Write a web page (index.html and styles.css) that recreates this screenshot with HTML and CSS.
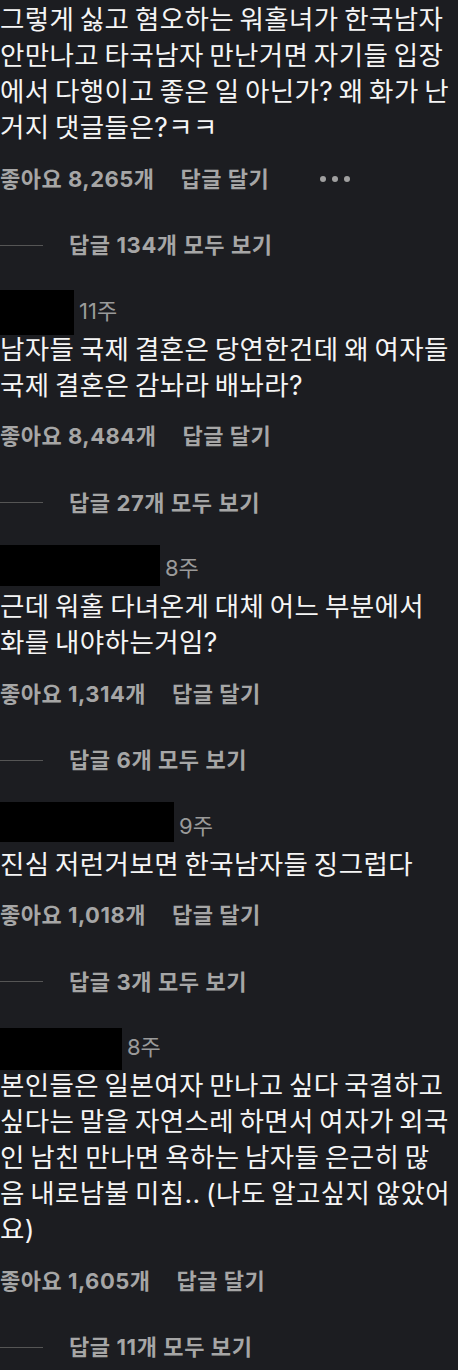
FILE: index.html
```html
<!DOCTYPE html>
<html lang="ko">
<head>
  <meta charset="UTF-8" />
  <meta name="viewport" content="width=device-width, initial-scale=1.0"/>
  <title>댓글</title>
  <link rel="stylesheet" href="styles.css">
</head>
<body>
  <div class="thread">

    <div class="comment first">
      <p class="text">그렇게 싫고 혐오하는 워홀녀가 한국남자 안만나고 타국남자 만난거면 자기들 입장에서 다행이고 좋은 일 아닌가? 왜 화가 난거지 댓글들은?ㅋㅋ</p>
      <div class="meta">
        <span>좋아요 8,265개</span>
        <span>답글 달기</span>
        <span class="dots"><i></i><i></i><i></i></span>
      </div>
      <div class="replies"><span class="line"></span>답글 134개 모두 보기</div>
    </div>

    <div class="comment">
      <div class="head">
        <span class="mask mask-a"></span>
        <span class="time">11주</span>
      </div>
      <p class="text">남자들 국제 결혼은 당연한건데 왜 여자들 국제 결혼은 감놔라 배놔라?</p>
      <div class="meta">
        <span>좋아요 8,484개</span>
        <span>답글 달기</span>
      </div>
      <div class="replies"><span class="line"></span>답글 27개 모두 보기</div>
    </div>

    <div class="comment">
      <div class="head">
        <span class="mask mask-b"></span>
        <span class="time">8주</span>
      </div>
      <p class="text">근데 워홀 다녀온게 대체 어느 부분에서 화를 내야하는거임?</p>
      <div class="meta">
        <span>좋아요 1,314개</span>
        <span>답글 달기</span>
      </div>
      <div class="replies"><span class="line"></span>답글 6개 모두 보기</div>
    </div>

    <div class="comment">
      <div class="head">
        <span class="mask mask-c"></span>
        <span class="time">9주</span>
      </div>
      <p class="text">진심 저런거보면 한국남자들 징그럽다</p>
      <div class="meta">
        <span>좋아요 1,018개</span>
        <span>답글 달기</span>
      </div>
      <div class="replies"><span class="line"></span>답글 3개 모두 보기</div>
    </div>

    <div class="comment">
      <div class="head">
        <span class="mask mask-d"></span>
        <span class="time">8주</span>
      </div>
      <p class="text">본인들은 일본여자 만나고 싶다 국결하고 싶다는 말을 자연스레 하면서 여자가 외국인 남친 만나면 욕하는 남자들 은근히 많음 내로남불 미침.. (나도 알고싶지 않았어요)</p>
      <div class="meta">
        <span>좋아요 1,605개</span>
        <span>답글 달기</span>
      </div>
      <div class="replies"><span class="line"></span>답글 11개 모두 보기</div>
    </div>

  </div>
</body>
</html>
```

FILE: styles.css
```css
body {
  margin: 0;
  background-color: #1c1d21;
  font-family: Inter, "Noto Sans CJK KR", sans-serif;
  color: #f5f5f5;
}
.thread {
  padding: 1px 5.7px 0 0;
}
.comment {
  margin-bottom: 38.5px;
}
.head {
  display: flex;
  align-items: flex-start;
  height: 33px;
}
.mask {
  display: block;
  background-color: #000;
  flex-shrink: 0;
}
.mask-a { width: 74px; height: 45px; margin-top: -8px; }
.mask-b { width: 160px; height: 41px; margin-top: -10px; }
.mask-c { width: 174px; height: 40px; margin-top: -11px; }
.mask-d { width: 122px; height: 42px; margin-top: -6px; }
.time {
  margin-left: 5px;
  font-size: 22px;
  line-height: 26px;
  color: #9a9a9a;
}
.text {
  margin: 0;
  font-size: 26.5px;
  line-height: 36px;
  letter-spacing: 0.4px;
  word-spacing: -2.35px;
}
.meta {
  display: flex;
  align-items: center;
  gap: 26px;
  margin-top: 19.5px;
  font-size: 22px;
  line-height: 28px;
  font-weight: 700;
  letter-spacing: 0.5px;
  color: #a6a6a6;
}
.dots {
  display: flex;
  gap: 6px;
  margin-left: 25px;
}
.dots i {
  width: 6px;
  height: 6px;
  border-radius: 50%;
  background-color: #a0a0a0;
}
.replies {
  display: flex;
  align-items: center;
  margin-top: 38.5px;
  font-size: 22px;
  line-height: 28px;
  font-weight: 700;
  letter-spacing: 0.6px;
  color: #a6a6a6;
}
.replies .line {
  width: 43px;
  height: 1px;
  background-color: #555;
  margin-right: 26px;
}
```
